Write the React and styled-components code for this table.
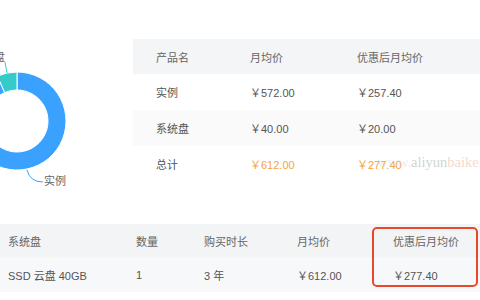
import styled, { createGlobalStyle } from 'styled-components';

// ── 전역 스타일 ──
const GlobalStyle = createGlobalStyle`
  html, body {
    margin: 0;
    padding: 0;
    background: #fff;
  }
  body {
    font-family: "Liberation Sans", "Noto Sans CJK SC", sans-serif;
    font-size: 11px;
    color: #555;
  }
`;

const Page = styled.div`
  width: 480px;
  height: 300px;
  overflow: hidden;
  position: relative;
  display: flex;
  flex-direction: column;
`;

/** 상단 — 도넛 차트 + 가격 요약표 */
const TopSection = styled.div`
  display: flex;
  height: 224px;
`;

const ChartArea = styled.div`
  width: 133px;
  flex-shrink: 0;
`;

const SummaryTable = styled.div`
  flex: 1;
  padding-top: 39px;
  position: relative;
  overflow: hidden;
`;

const SummaryRow = styled.div`
  display: grid;
  grid-template-columns: 94px 107px 1fr;
  align-items: center;
  height: ${({ $head }) => ($head ? '35px' : '36px')};
  padding-left: 23px;
  background: ${({ $bg }) => $bg || '#fff'};
  color: ${({ $head }) => ($head ? '#666' : '#555')};
`;

const Price = styled.span`
  color: ${({ $accent }) => ($accent ? '#f6a23c' : 'inherit')};
`;

const Yen = styled.span`
  font-family: "Noto Sans CJK SC", sans-serif;
`;

/** 워터마크 텍스트 */
const Watermark = styled.div`
  position: absolute;
  left: 244px;
  top: 154px;
  font-family: "Liberation Serif", serif;
  font-size: 14.5px;
  white-space: nowrap;
  color: rgba(185, 185, 185, 0.65);
  pointer-events: none;

  i {
    font-style: normal;
    color: rgba(200, 200, 200, 0.35);
  }

  b {
    font-weight: normal;
    color: rgba(245, 200, 185, 0.75);
  }
`;

/** 하단 — 구성 상세표 */
const DetailTable = styled.div`
  position: relative;
`;

const DetailRow = styled.div`
  display: grid;
  grid-template-columns: 128px 68px 93px 96px 1fr;
  align-items: center;
  padding-left: 8px;
  height: ${({ $head }) => ($head ? '33px' : '35px')};
  background: ${({ $head }) => ($head ? '#f3f4f6' : '#f7f8fa')};
  color: ${({ $head }) => ($head ? '#666' : '#555')};
`;

/** 강조 박스 (빨간 테두리) */
const Highlight = styled.div`
  position: absolute;
  left: 372px;
  top: 3px;
  width: 102px;
  height: 56px;
  border: 2px solid #e8482c;
  border-radius: 5px;
  pointer-events: none;
`;

const cx = 17;
const cy = 121;
const R = 49;
const r = 31;

function arcPath(a0, a1) {
  const rad = (a) => ((a - 90) * Math.PI) / 180;
  const p = (rr, a) => [cx + rr * Math.cos(rad(a)), cy + rr * Math.sin(rad(a))];
  const large = a1 - a0 > 180 ? 1 : 0;
  const [x0, y0] = p(R, a0);
  const [x1, y1] = p(R, a1);
  const [x2, y2] = p(r, a1);
  const [x3, y3] = p(r, a0);
  return `M${x0},${y0} A${R},${R} 0 ${large} 1 ${x1},${y1} L${x2},${y2} A${r},${r} 0 ${large} 0 ${x3},${y3} Z`;
}

function Donut() {
  const blueEnd = (572 / 612) * 360;
  return (
    <svg width="133" height="224" viewBox="0 0 133 224">
      <path d={arcPath(0, blueEnd)} fill="#3aa1ff" stroke="#fff" strokeWidth="1" />
      <path d={arcPath(blueEnd, 360)} fill="#36cbcb" stroke="#fff" strokeWidth="1" />
      <path d="M7,73 L5,62" stroke="#36cbcb" strokeWidth="1" fill="none" />
      <text x="5" y="61" textAnchor="end" fontSize="11" fill="#666"
        fontFamily='"Noto Sans CJK SC", sans-serif'>系统盘</text>
      <path d="M27,170 Q30,182 43,182" stroke="#3aa1ff" strokeWidth="1" fill="none" />
      <text x="44" y="185" fontSize="11" fill="#666"
        fontFamily='"Noto Sans CJK SC", sans-serif'>实例</text>
    </svg>
  );
}

const summary = [
  { name: '实例', price: '572.00', discount: '257.40', bg: '#fff' },
  { name: '系统盘', price: '40.00', discount: '20.00', bg: '#fafafa' },
];

export default function App() {
  return (
    <>
      <GlobalStyle />
      <Page>
        <TopSection>
          <ChartArea>
            <Donut />
          </ChartArea>
          <SummaryTable>
            <SummaryRow $head $bg="#f4f5f7">
              <span>产品名</span>
              <span>月均价</span>
              <span>优惠后月均价</span>
            </SummaryRow>
            {summary.map((row) => (
              <SummaryRow key={row.name} $bg={row.bg}>
                <span>{row.name}</span>
                <Price><Yen>￥</Yen>{row.price}</Price>
                <Price><Yen>￥</Yen>{row.discount}</Price>
              </SummaryRow>
            ))}
            <SummaryRow>
              <span>总计</span>
              <Price $accent><Yen>￥</Yen>612.00</Price>
              <Price $accent><Yen>￥</Yen>277.40</Price>
            </SummaryRow>
            <Watermark><i>www.</i>aliyun<b>baike.com</b></Watermark>
          </SummaryTable>
        </TopSection>
        <DetailTable>
          <DetailRow $head>
            <span>系统盘</span>
            <span>数量</span>
            <span>购买时长</span>
            <span>月均价</span>
            <span>优惠后月均价</span>
          </DetailRow>
          <DetailRow>
            <span>SSD 云盘 40GB</span>
            <span>1</span>
            <span>3 年</span>
            <Price><Yen>￥</Yen>612.00</Price>
            <Price><Yen>￥</Yen>277.40</Price>
          </DetailRow>
          <Highlight />
        </DetailTable>
      </Page>
    </>
  );
}
